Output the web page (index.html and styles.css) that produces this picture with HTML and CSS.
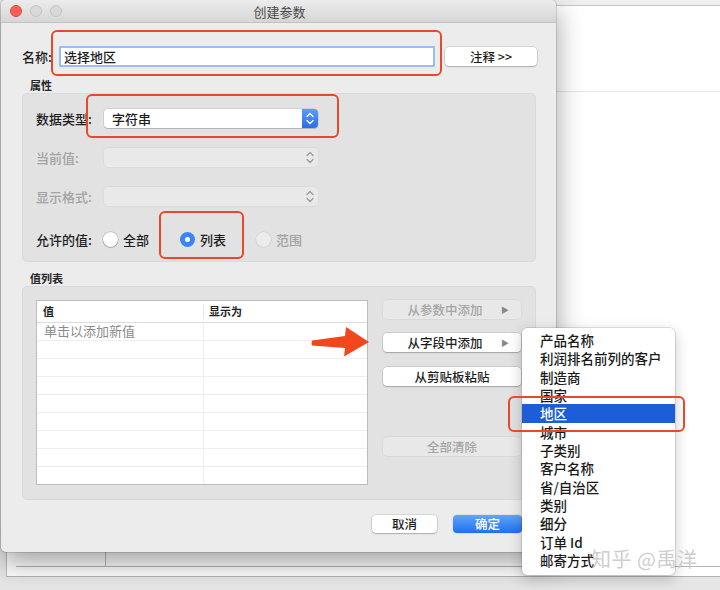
FILE: index.html
```html
<!DOCTYPE html>
<html lang="zh">
<head>
<meta charset="utf-8">
<title>创建参数</title>
<link rel="stylesheet" href="styles.css">
</head>
<body>
<div class="backwin">
  <div class="backwin-top"></div>
  <div class="backwin-line"></div>
  <div class="backwin-bottom"><span class="bw-col"></span></div>
</div>

<div class="dialog">
  <div class="titlebar">
    <span class="light red"></span><span class="light"></span><span class="light"></span>
    <span class="title">创建参数</span>
  </div>
  <div class="body">
    <div class="name-row">
      <span class="lbl name-lbl">名称:</span>
      <div class="input">选择地区</div>
      <button class="btn note-btn">注释 &gt;&gt;</button>
    </div>

    <div class="sec-label">属性</div>
    <div class="group props">
      <div class="prow r1">
        <span class="lbl plbl">数据类型:</span>
        <div class="select">
          <span class="sel-text">字符串</span>
          <span class="sel-arrows blue">
            <svg width="16" height="19" viewBox="0 0 16 19"><path d="M5 7.5 L8 4.5 L11 7.5 M5 11.5 L8 14.5 L11 11.5" fill="none" stroke="#fff" stroke-width="1.4" stroke-linecap="round" stroke-linejoin="round"/></svg>
          </span>
        </div>
      </div>
      <div class="prow r2">
        <span class="lbl plbl dim">当前值:</span>
        <div class="select disabled">
          <span class="sel-text"></span>
          <span class="sel-arrows">
            <svg width="16" height="19" viewBox="0 0 16 19"><path d="M5 7.5 L8 4.5 L11 7.5 M5 11.5 L8 14.5 L11 11.5" fill="none" stroke="#9a9a9a" stroke-width="1.3" stroke-linecap="round" stroke-linejoin="round"/></svg>
          </span>
        </div>
      </div>
      <div class="prow r3">
        <span class="lbl plbl dim">显示格式:</span>
        <div class="select disabled">
          <span class="sel-text"></span>
          <span class="sel-arrows">
            <svg width="16" height="19" viewBox="0 0 16 19"><path d="M5 7.5 L8 4.5 L11 7.5 M5 11.5 L8 14.5 L11 11.5" fill="none" stroke="#9a9a9a" stroke-width="1.3" stroke-linecap="round" stroke-linejoin="round"/></svg>
          </span>
        </div>
      </div>
      <div class="prow r4">
        <span class="lbl plbl">允许的值:</span>
        <span class="radio"></span><span class="rlbl">全部</span>
        <span class="radio on"></span><span class="rlbl">列表</span>
        <span class="radio off"></span><span class="rlbl dim">范围</span>
      </div>
    </div>

    <div class="sec-label">值列表</div>
    <div class="group values">
      <div class="table">
        <div class="thead"><span class="c1">值</span><span class="c2">显示为</span></div>
        <div class="trow"><span class="c1 hint">单击以添加新值</span><span class="c2"></span></div>
        <div class="trow"><span class="c1"></span><span class="c2"></span></div>
        <div class="trow"><span class="c1"></span><span class="c2"></span></div>
        <div class="trow"><span class="c1"></span><span class="c2"></span></div>
        <div class="trow"><span class="c1"></span><span class="c2"></span></div>
        <div class="trow"><span class="c1"></span><span class="c2"></span></div>
        <div class="trow"><span class="c1"></span><span class="c2"></span></div>
        <div class="trow"><span class="c1"></span><span class="c2"></span></div>
        <div class="trow last"><span class="c1"></span><span class="c2"></span></div>
      </div>
      <div class="vbtns">
        <button class="btn wide disabled">从参数中添加<span class="tri">▶</span></button>
        <button class="btn wide">从字段中添加<span class="tri">▶</span></button>
        <button class="btn wide">从剪贴板粘贴</button>
        <button class="btn wide disabled clear">全部清除</button>
      </div>
    </div>

    <div class="footer">
      <button class="btn cancel">取消</button>
      <button class="btn ok">确定</button>
    </div>
  </div>
</div>

<div class="menu">
  <div class="mi">产品名称</div>
  <div class="mi">利润排名前列的客户</div>
  <div class="mi">制造商</div>
  <div class="mi">国家</div>
  <div class="mi sel">地区</div>
  <div class="mi">城市</div>
  <div class="mi">子类别</div>
  <div class="mi">客户名称</div>
  <div class="mi">省/自治区</div>
  <div class="mi">类别</div>
  <div class="mi">细分</div>
  <div class="mi">订单 Id</div>
  <div class="mi">邮寄方式</div>
</div>

<div class="anno a-name"></div>
<div class="anno a-type"></div>
<div class="anno a-list"></div>
<div class="anno a-region"></div>

<svg class="arrow" width="62" height="34" viewBox="0 0 62 34">
  <path d="M2 14.5 Q1 17 2 19.5 L35 22 L34 30.5 L59 16 L36 1 L35 10 Z" fill="#f0471f"/>
</svg>

<div class="watermark">知乎 @禹洋</div>
</body>
</html>
```

FILE: styles.css
```css
* { box-sizing: border-box; }
html, body { margin: 0; padding: 0; }
body {
  width: 720px;
  height: 590px;
  overflow: hidden;
  position: relative;
  background: #e6e6e6;
  font-family: "Noto Sans CJK SC", "Noto Sans", "Liberation Sans", sans-serif;
  font-size: 13px;
  color: #1e1e1e;
}

/* window behind the dialog */
.backwin {
  position: absolute;
  left: 6px;
  top: 0;
  width: 714px;
  height: 577px;
  background: #fff;
  border-left: 1px solid #b9b9b9;
  border-bottom: 1px solid #b3b3b3;
}
.backwin-top {
  height: 6px;
  background: #efefef;
  border-bottom: 1px solid #c6c6c6;
}
.backwin-line {
  margin-top: 85px;
  margin-left: 540px;
  height: 1px;
  background: #e6e6e6;
}
.backwin-bottom {
  position: absolute;
  left: 9px;
  right: 0;
  bottom: 9px;
  height: 1px;
  background: #b5b5b5;
}
.bw-col {
  position: absolute;
  left: 89px;
  bottom: 1px;
  width: 1px;
  height: 20px;
  background: #bdbdbd;
}

/* dialog */
.dialog {
  position: absolute;
  left: 1px;
  top: 0;
  width: 555px;
  height: 552px;
  background: #ececec;
  border-radius: 5px;
  box-shadow: 0 0 0 1px rgba(0,0,0,0.12), 0 10px 28px rgba(0,0,0,0.38);
  overflow: hidden;
}
.titlebar {
  position: relative;
  height: 23px;
  background: linear-gradient(#ececec, #d6d6d6);
  border-bottom: 1px solid #c2c2c2;
  display: flex;
  align-items: center;
  padding-left: 9px;
  gap: 8px;
}
.light {
  width: 12px;
  height: 12px;
  border-radius: 50%;
  background: #d9d9d9;
  border: 1px solid #c4c4c4;
}
.light.red { background: #fc5f57; border-color: #e2463f; }
.title {
  position: absolute;
  left: 0;
  right: 0;
  top: 3px;
  text-align: center;
  font-size: 13px;
  line-height: 17px;
  color: #4a4a4a;
  padding-left: 2px;
}

.body {
  padding: 23px 19px 0 21px;
}
.lbl { font-weight: 500; white-space: nowrap; }
.dim { color: #a3a3a3; }

.name-row {
  display: flex;
  align-items: center;
  height: 21px;
}
.name-lbl { width: 37px; font-size: 13px; }
.input {
  width: 376px;
  height: 21px;
  background: #fff;
  border: 2px solid #9dbdf0;
  border-radius: 1px;
  padding-left: 3px;
  line-height: 17px;
  font-size: 13px;
  font-weight: 500;
}
.btn {
  font-family: inherit;
  font-size: 12.5px;
  font-weight: 500;
  color: #1e1e1e;
  background: #fff;
  border: none;
  border-radius: 4px;
  box-shadow: 0 0 0 0.5px rgba(0,0,0,0.18), 0 1px 1.5px rgba(0,0,0,0.2);
  height: 19px;
  padding: 0;
  line-height: 19px;
  text-align: center;
}
.note-btn {
  margin-left: 10px;
  width: 92px;
}

.sec-label {
  font-size: 11px;
  font-weight: 700;
  line-height: 14px;
  padding-left: 8px;
  color: #262626;
}
.name-row + .sec-label { margin-top: 11px; margin-bottom: 1px; }
.props + .sec-label { margin-top: 9px; margin-bottom: 1px; }

.group {
  width: 514px;
  background: #e2e2e2;
  border: 1px solid #dadada;
  border-radius: 5px;
}
.props {
  height: 169px;
  padding: 15px 14px 0 13px;
  display: flex;
  flex-direction: column;
}
.prow {
  display: flex;
  align-items: center;
  height: 19px;
}
.r2, .r3 { margin-top: 20px; }
.r4 { margin-top: 24px; }
.plbl { width: 68px; }
.select {
  width: 214px;
  height: 19px;
  background: #fff;
  border-radius: 4px;
  box-shadow: 0 0 0 0.5px rgba(0,0,0,0.15), 0 1px 1px rgba(0,0,0,0.15);
  display: flex;
  align-items: center;
  overflow: hidden;
}
.sel-text {
  flex: 1;
  padding-left: 8px;
  font-weight: 500;
  line-height: 19px;
}
.sel-arrows {
  width: 16px;
  height: 19px;
  display: flex;
}
.sel-arrows.blue {
  background: linear-gradient(#5b9cf8, #2a6ee6);
}
.select.disabled {
  background: #e9e9e9;
  box-shadow: 0 0 0 0.5px rgba(0,0,0,0.06);
}

.radio {
  width: 15px;
  height: 15px;
  border-radius: 50%;
  background: #fff;
  box-shadow: 0 0 0 0.5px rgba(0,0,0,0.25), 0 1px 1px rgba(0,0,0,0.15);
  margin-left: -1px;
  position: relative;
  flex: none;
}
.radio.on {
  background: #3a86f6;
  box-shadow: none;
  margin-left: 31px;
}
.radio.on::after {
  content: "";
  position: absolute;
  left: 5px;
  top: 5px;
  width: 5px;
  height: 5px;
  border-radius: 50%;
  background: #fff;
}
.radio.off {
  background: #ececec;
  box-shadow: 0 0 0 0.5px rgba(0,0,0,0.1);
  margin-left: 30px;
}
.rlbl {
  margin-left: 5px;
  font-weight: 500;
}

.values {
  height: 214px;
  padding: 13px 14px 0 13px;
  display: flex;
  gap: 14px;
}
.table {
  width: 334px;
  height: 185px;
  background: #fff;
  border: 1px solid #bcbcbc;
  display: flex;
  flex-direction: column;
}
.thead, .trow {
  display: flex;
}
.thead {
  height: 22px;
  border-bottom: 1px solid #dcdcdc;
  font-size: 11px;
  font-weight: 700;
  line-height: 21px;
}
.thead .c1 { width: 167px; padding-left: 6px; border-right: 1px solid #e3e3e3; margin: 3px 0; line-height: 15px; }
.thead .c2 { padding-left: 5px; }
.trow {
  height: 18px;
  border-bottom: 1px solid #efefef;
}
.trow.last { border-bottom: none; flex: 1; }
.trow .c1 { width: 167px; border-right: 1px solid #efefef; padding-left: 7px; line-height: 16px; }
.hint { color: #8b8b8b; font-weight: 400; }

.vbtns {
  display: flex;
  flex-direction: column;
  padding-top: 0;
  padding-left: 1px;
}
.btn.wide {
  width: 138px;
  position: relative;
  margin-bottom: 14px;
  padding-right: 14px;
}
.btn.wide:nth-child(2) { margin-bottom: 15px; }
.btn.wide:nth-child(3) { padding-right: 0; }
.btn.clear { margin-top: 37px; padding-right: 0; }
.btn.disabled {
  background: #e8e8e8;
  color: #a5a5a5;
  box-shadow: 0 0 0 0.5px rgba(0,0,0,0.08);
}
.tri {
  position: absolute;
  right: 12px;
  top: 0;
  font-size: 8px;
  color: #888;
}

.footer {
  display: flex;
  justify-content: flex-end;
  padding-right: 15px;
  margin-top: 15px;
  gap: 16px;
}
.cancel { width: 65px; height: 18px; line-height: 18px; }
.ok {
  width: 69px;
  height: 18px;
  line-height: 18px;
  color: #fff;
  background: linear-gradient(#62a5fb, #1f6ff1);
  box-shadow: 0 0 0 0.5px rgba(0,0,0,0.1);
}

/* popup menu */
.menu {
  position: absolute;
  left: 522px;
  top: 328px;
  width: 153px;
  height: 247px;
  padding-top: 3px;
  background: #fff;
  border-radius: 5px;
  box-shadow: 0 0 0 0.5px rgba(0,0,0,0.2), 0 4px 14px rgba(0,0,0,0.22);
}
.mi {
  height: 18.33px;
  line-height: 18.33px;
  padding-left: 18px;
  font-size: 13.5px;
  font-weight: 500;
  color: #1a1a1a;
  white-space: nowrap;
}
.mi.sel {
  background: #1c5ed6;
  color: #fff;
}

/* annotations */
.anno {
  position: absolute;
  border: 2.5px solid #e8482b;
  border-radius: 6px;
}
.a-name { left: 51px; top: 30px; width: 391px; height: 46px; }
.a-type { left: 86px; top: 94px; width: 253px; height: 44px; }
.a-list { left: 159px; top: 211px; width: 85px; height: 48px; }
.a-region { left: 508px; top: 396px; width: 177px; height: 36px; }

.arrow {
  position: absolute;
  left: 310px;
  top: 326px;
}

.watermark {
  position: absolute;
  left: 591px;
  top: 545px;
  font-size: 20px;
  line-height: 28px;
  color: rgba(200,200,200,0.9);
  letter-spacing: 0.5px;
  white-space: nowrap;
}
```
